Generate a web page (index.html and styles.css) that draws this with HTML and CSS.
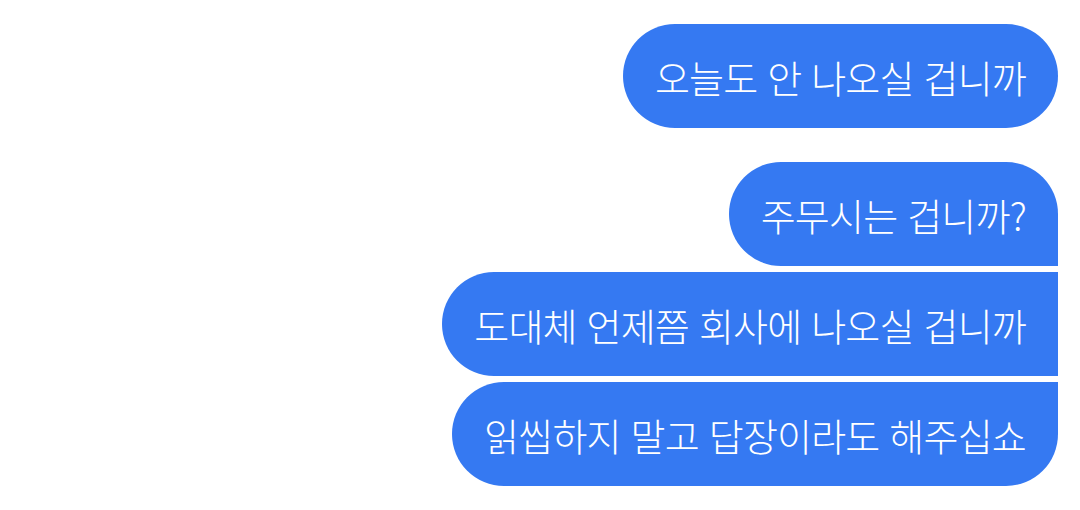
FILE: index.html
```html
<!DOCTYPE html>
<html lang="ko">
<head>
<meta charset="utf-8">
<link rel="stylesheet" href="styles.css">
</head>
<body>
<div class="chat">
  <div class="bubble solo">오늘도 안 나오실 겁니까</div>
  <div class="group">
    <div class="bubble first">주무시는 겁니까?</div>
    <div class="bubble middle">도대체 언제쯤 회사에 나오실 겁니까</div>
    <div class="bubble last">읽씹하지 말고 답장이라도 해주십쇼</div>
  </div>
</div>
</body>
</html>
```
FILE: styles.css
```css
html, body {
  margin: 0;
  padding: 0;
  background: #ffffff;
}
.chat {
  width: 1080px;
  height: 510px;
  box-sizing: border-box;
  padding: 24px 22px 0 0;
  display: flex;
  flex-direction: column;
  align-items: flex-end;
  gap: 34px;
  font-family: "Noto Sans CJK KR", "Noto Sans", sans-serif;
}
.group {
  display: flex;
  flex-direction: column;
  align-items: flex-end;
  gap: 6px;
}
.bubble {
  box-sizing: border-box;
  height: 104px;
  padding: 0 32px 0 32px;
  display: flex;
  align-items: center;
  background: #3579f2;
  color: #ffffff;
  font-size: 38px;
  font-weight: 300;
  letter-spacing: -0.8px;
  white-space: nowrap;
  border-radius: 52px;
}
.first { border-radius: 52px 52px 0 52px; }
.middle { border-radius: 52px 0 0 52px; }
.last { border-radius: 52px 0 52px 52px; }
```
